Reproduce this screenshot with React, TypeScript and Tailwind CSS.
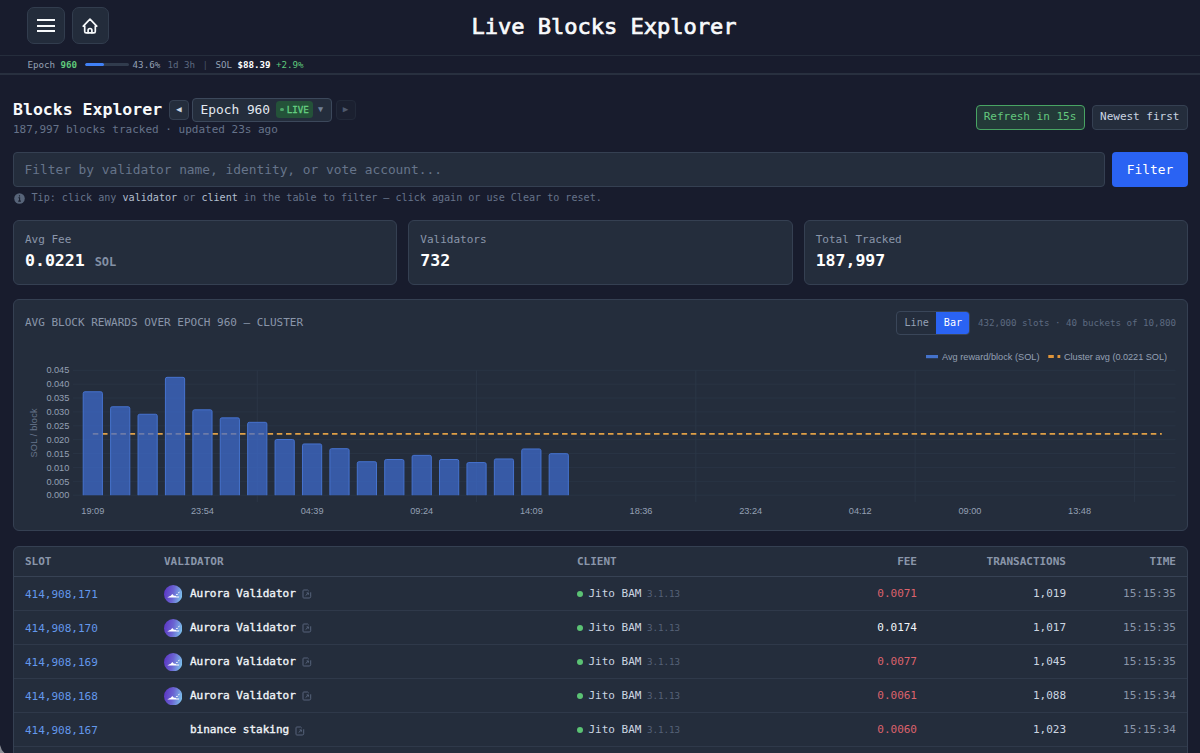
import React from "react";

const rewards = [
  0.0374, 0.032, 0.0293, 0.0426, 0.0309, 0.028, 0.0264, 0.0202, 0.0186, 0.0169, 0.0122, 0.013, 0.0145, 0.013, 0.0119,
  0.0132, 0.0168, 0.0151,
];
const xLabels = ["19:09", "23:54", "04:39", "09:24", "14:09", "18:36", "23:24", "04:12", "09:00", "13:48"];
const yLabels = [0, 0.005, 0.01, 0.015, 0.02, 0.025, 0.03, 0.035, 0.04, 0.045];

const blocks = [
  { slot: "414,908,171", name: "Aurora Validator", avatar: true, fee: "0.0071", low: true, txs: "1,019", time: "15:15:35" },
  { slot: "414,908,170", name: "Aurora Validator", avatar: true, fee: "0.0174", low: false, txs: "1,017", time: "15:15:35" },
  { slot: "414,908,169", name: "Aurora Validator", avatar: true, fee: "0.0077", low: true, txs: "1,045", time: "15:15:35" },
  { slot: "414,908,168", name: "Aurora Validator", avatar: true, fee: "0.0061", low: true, txs: "1,088", time: "15:15:34" },
  { slot: "414,908,167", name: "binance staking", avatar: false, fee: "0.0060", low: true, txs: "1,023", time: "15:15:34" },
];

const stats = [
  { label: "Avg Fee", value: "0.0221", unit: "SOL" },
  { label: "Validators", value: "732" },
  { label: "Total Tracked", value: "187,997" },
];

function HomeIcon() {
  return (
    <svg className="h-4 w-4" viewBox="0 0 16 16" fill="none" stroke="#f8fafc" strokeWidth="1.7" strokeLinejoin="round" strokeLinecap="round">
      <path d="M2.7 8.2H1.3L8 1.2l6.7 7h-1.4v5.2c0 .9-.6 1.5-1.5 1.5H4.2c-.9 0-1.5-.6-1.5-1.5z" />
      <path d="M6.1 14.7v-2.5c0-1 .7-1.7 1.9-1.7s1.9.7 1.9 1.7v2.5" />
    </svg>
  );
}

function Avatar() {
  return (
    <svg className="h-[18.4px] w-[18.4px]" viewBox="0 0 20 20">
      <defs>
        <linearGradient id="aurora" x1="0" y1="0.3" x2="1" y2="0.5">
          <stop offset="0" stopColor="#5b35c4" />
          <stop offset="0.5" stopColor="#6b64d2" />
          <stop offset="1" stopColor="#7cc0ec" />
        </linearGradient>
      </defs>
      <circle cx="10" cy="10" r="10" fill="url(#aurora)" />
      <path d="M3.6 13.6 6 12.1l1.4-.3L9 9.8l1.8 1.9 1.7.1 1 .8h3l-.3 1z" fill="#fff" />
      <path d="M13.6 10.3h.9M15.9 8.6l.5-.8" stroke="#fff" strokeWidth="1" strokeLinecap="round" />
    </svg>
  );
}

function LinkIcon() {
  return (
    <svg className="h-[10px] w-[10px]" viewBox="0 0 10 10" fill="none" stroke="#56637a" strokeWidth="1">
      <path d="M5.6 1H1.8Q1 1 1 1.8v6.4Q1 9 1.8 9h5.4M5.6 1l1.2 1.2M8.7 3.3v4.4Q8.7 9 7.2 9M3.6 6.6l2.6-2.4M4.6 3.9h1.8v1.8" />
    </svg>
  );
}

// Coordinates: value 0 sits at y=495.2, every 0.005 is 13.88px, one bucket is 27.41px wide
function RewardsChart() {
  const y = (v: number) => 495.2 - (v / 0.005) * 13.88;
  const x = (i: number) => 92.8 + i * 27.41;
  return (
    <svg className="block h-[174px] w-[1151px]" viewBox="25 346 1151 174" fontFamily="'Liberation Sans', Arial, sans-serif" fontSize="9.2" fill="#94a0b4">
      {yLabels.map((v) => (
        <g key={v}>
          <line x1="73" x2="1175.5" y1={y(v)} y2={y(v)} stroke="#293444" strokeWidth="1" />
          <text x="69.3" y={y(v) + 3.2} textAnchor="end">{v.toFixed(3)}</text>
        </g>
      ))}
      {[6, 14, 22, 30, 38].map((i) => (
        <line key={i} x1={x(i)} x2={x(i)} y1="370.3" y2="502" stroke="#2b3646" strokeWidth="1" />
      ))}
      <line x1="92.8" x2="1161.8" y1={y(0.0221)} y2={y(0.0221)} stroke="#e0a046" strokeWidth="1.7" strokeDasharray="5.52 3.68" />
      {rewards.map((v, i) => {
        const left = x(i) - 9.6;
        const top = y(v) + 0.4;
        return (
          <path
            key={i}
            d={`M${left} 495.2V${top + 1.6}q0-1.6 1.6-1.6h16q1.6 0 1.6 1.6V495.2`}
            fill="#3f6cd0"
            fillOpacity="0.72"
            stroke="#4673cf"
            strokeWidth="1"
          />
        );
      })}
      {xLabels.map((label, i) => (
        <text key={i} x={x(i * 4)} y="514" textAnchor="middle">{label}</text>
      ))}
      <text transform="translate(36.7 433) rotate(-90)" textAnchor="middle" fill="#66748a" textLength="49">SOL / block</text>
      <rect x="926" y="355" width="12" height="3.2" fill="#4472cb" />
      <text x="942" y="359.6" textLength="97.5">Avg reward/block (SOL)</text>
      <path d="M1048.3 356.6h12" stroke="#e0953a" strokeWidth="3" strokeDasharray="5.5 3.7" />
      <text x="1064" y="359.6" textLength="103">Cluster avg (0.0221 SOL)</text>
    </svg>
  );
}

const columns = "grid grid-cols-[139px_413px_220px_120px_149px_110px] items-center px-[11px]";

export default function App() {
  return (
    <div className="relative h-[753px] w-[1200px] overflow-hidden bg-[#181c2d] font-['DejaVu_Sans_Mono','Liberation_Mono',monospace] text-[11.04px] tracking-[-0.02px] text-[#cbd5e1]">
      {/* Top bar */}
      <header className="grid h-[56px] grid-cols-[1fr_auto_1fr] items-center border-b border-[#252d3c] px-[27px] pb-1">
        <div className="flex gap-[7px]">
          <button className="flex h-[37px] w-[37.5px] flex-col items-center justify-center gap-[3.7px] rounded-[7px] border border-[#323d4e] bg-[#232c3b]">
            <span className="h-[2px] w-[18.5px] bg-slate-50" />
            <span className="h-[2px] w-[18.5px] bg-slate-50" />
            <span className="h-[2px] w-[18.5px] bg-slate-50" />
          </button>
          <button className="flex h-[37px] w-[37.5px] items-center justify-center rounded-[7px] border border-[#323d4e] bg-[#232c3b]">
            <HomeIcon />
          </button>
        </div>
        <h1 className="pt-[3px] pl-[8px] text-[22.08px] leading-none tracking-[-0.05px] text-slate-50 [-webkit-text-stroke:0.7px]">Live Blocks Explorer</h1>
      </header>

      {/* Epoch ticker */}
      <div className="flex h-[19px] items-center border-b-2 border-[#28303f] pl-[27.5px] text-[9.2px] leading-none whitespace-nowrap text-[#94a0b4]">
        <span>Epoch</span>
        <span className="ml-[5.5px] font-bold text-[#5fc97b]">960</span>
        <span className="ml-[7.5px] h-[3.7px] w-[44px] overflow-hidden rounded-full bg-[#313c4d]">
          <span className="block h-full w-[43.6%] rounded-full bg-[#4080f5]" />
        </span>
        <span className="ml-[4px]">43.6%</span>
        <span className="ml-[7.4px] text-[#5d6a80]">1d 3h</span>
        <span className="ml-[7.4px] text-[#465166]">|</span>
        <span className="ml-[7.4px]">SOL</span>
        <span className="ml-[5.5px] font-bold text-white">$88.39</span>
        <span className="ml-[5.5px] text-[#5fc97b]">+2.9%</span>
      </div>

      <main className="pt-[21px] pr-[12px] pl-[13px]">
        {/* Heading */}
        <div className="flex h-[43px] items-start justify-between">
          <div>
            <div className="flex h-[27px] items-center">
              <h2 className="w-[150px] pt-px text-[16.56px] leading-none font-bold text-slate-50">Blocks Explorer</h2>
              <button className="ml-[6px] flex h-[20px] w-[20px] items-center justify-center rounded-[4px] border border-[#354052] bg-[#242d3c] text-[9px] leading-none text-slate-300">◀</button>
              <button className="ml-[3px] flex h-[24px] w-[140px] items-center rounded-[4px] border border-[#3c485b] bg-[#242d3c] pl-[7.5px] text-[12.88px] leading-none whitespace-nowrap text-slate-200">
                <span className="pt-px">Epoch 960</span>
                <span className="ml-[6px] flex h-[16.5px] w-[37px] items-center gap-[3px] rounded-[3.5px] bg-[#245239] pl-[4px] text-[9.2px] text-[#64cf80] [-webkit-text-stroke:0.3px]">
                  <span className="h-[3.7px] w-[3.7px] rounded-full bg-[#4ca869]" />
                  LIVE
                </span>
                <span className="ml-[5px] text-[8.5px] text-[#718097]">▼</span>
              </button>
              <button className="ml-[3.5px] flex h-[20px] w-[20px] items-center justify-center rounded-[4px] border border-[#222939] bg-[#1b2030] text-[9px] leading-none text-[#4e586c]">▶</button>
            </div>
            <p className="mt-[1px] leading-none text-[#66738a]">187,997 blocks tracked · updated 23s ago</p>
          </div>
          <div className="mt-[9px] flex gap-[7px]">
            <button className="h-[24.5px] w-[109px] rounded-[4px] border border-[#48a463] bg-[#233a38] text-[#64c87e]">Refresh in 15s</button>
            <button className="h-[24.5px] w-[96.5px] rounded-[4px] border border-[#354052] bg-[#242d3c]">Newest first</button>
          </div>
        </div>

        {/* Filter */}
        <div className="mt-[13px] flex gap-[7px] text-[12.88px]">
          <input
            className="h-[35px] flex-1 rounded-[4px] border border-[#354052] bg-[#242d3c] px-[10.5px] placeholder:text-[#66748a]"
            placeholder="Filter by validator name, identity, or vote account..."
          />
          <button className="h-[35px] w-[76px] rounded-[4px] bg-[#2a63f3] text-white">Filter</button>
        </div>
        <div className="mt-[5px] flex h-[13px] items-center gap-[6.5px] pl-px text-[10.12px] leading-none text-[#66738a]">
          <svg className="h-[11px] w-[11px]" viewBox="0 0 11 11">
            <circle cx="5.5" cy="5.5" r="5.3" fill="#576479" />
            <path d="M5.5 2.2v1.4M4.4 4.8h1.2v3.2M4.2 8.1h2.7" stroke="#1a2031" strokeWidth="1.1" fill="none" />
          </svg>
          <p>
            Tip: click any <span className="text-[#b3bfcf]">validator</span> or <span className="text-[#b3bfcf]">client</span> in the table to filter — click again or use Clear to reset.
          </p>
        </div>

        {/* Stats */}
        <div className="mt-[15px] grid grid-cols-3 gap-[11px]">
          {stats.map((s) => (
            <div key={s.label} className="h-[65px] rounded-[6px] border border-[#354052] bg-[#242d3c] px-[11px] pt-[13px] leading-none">
              <div className="text-[#8a96aa]">{s.label}</div>
              <div className="mt-[8px] text-[16.56px] font-bold text-white">
                {s.value}
                {s.unit && <span className="ml-[10px] text-[12px] text-[#8390a5]">{s.unit}</span>}
              </div>
            </div>
          ))}
        </div>

        {/* Rewards chart */}
        <section className="mt-[14px] h-[232px] rounded-[6px] border border-[#354052] bg-[#242d3c] px-[11px] pt-[11px]">
          <div className="flex h-[24px] items-center">
            <h3 className="pt-px text-[#8a96aa]">AVG BLOCK REWARDS OVER EPOCH 960 — CLUSTER</h3>
            <div className="ml-auto flex h-[24px] w-[74.5px] overflow-hidden rounded-[4px] border border-[#3a4659] text-[10.12px]">
              <button className="w-[39.5px] text-[#94a0b4]">Line</button>
              <button className="flex-1 bg-[#2a63f3] text-white">Bar</button>
            </div>
            <span className="ml-[7.5px] text-[9.2px] tracking-[-0.03px] text-[#5d6a80]">432,000 slots · 40 buckets of 10,800</span>
          </div>
          <div className="mt-[11px]">
            <RewardsChart />
          </div>
        </section>

        {/* Blocks table */}
        <section className="mt-[15px] h-[230px] rounded-t-[6px] border border-[#354052] bg-[#242d3c]">
          <div className={`${columns} h-[30px] border-b border-[#374254] pt-px font-bold text-[#8a96aa]`}>
            <span>SLOT</span>
            <span>VALIDATOR</span>
            <span>CLIENT</span>
            <span className="text-right">FEE</span>
            <span className="text-right">TRANSACTIONS</span>
            <span className="text-right">TIME</span>
          </div>
          {blocks.map((b) => (
            <div key={b.slot} className={`${columns} h-[34px] border-b border-[#2f394a]`}>
              <span className="pt-[3px] text-[#6398ec]">{b.slot}</span>
              <span className="flex items-center pt-px">
                <span className="mr-[7.5px] w-[18.4px]">{b.avatar && <Avatar />}</span>
                <span className="text-slate-100 [-webkit-text-stroke:0.35px]">{b.name}</span>
                <span className="ml-[6px] pt-px"><LinkIcon /></span>
              </span>
              <span className="flex items-center pt-px">
                <span className="mr-[5.5px] h-[6px] w-[6px] rounded-full bg-[#5bc274]" />
                Jito BAM
                <span className="ml-[5.5px] text-[9.2px] text-[#566278]">3.1.13</span>
              </span>
              <span className={`pt-px text-right ${b.low ? "text-[#dc626c]" : "text-slate-100"}`}>{b.fee}</span>
              <span className="pt-px text-right">{b.txs}</span>
              <span className="pt-px text-right text-[#8a96aa]">{b.time}</span>
            </div>
          ))}
        </section>
      </main>

      {/* Rounded window corner */}
      <svg className="absolute bottom-0 left-0 h-[8px] w-[5px]" viewBox="0 0 5 8">
        <path d="M0 0Q1 5 4.5 8H0z" fill="#8b8e96" />
      </svg>
    </div>
  );
}
